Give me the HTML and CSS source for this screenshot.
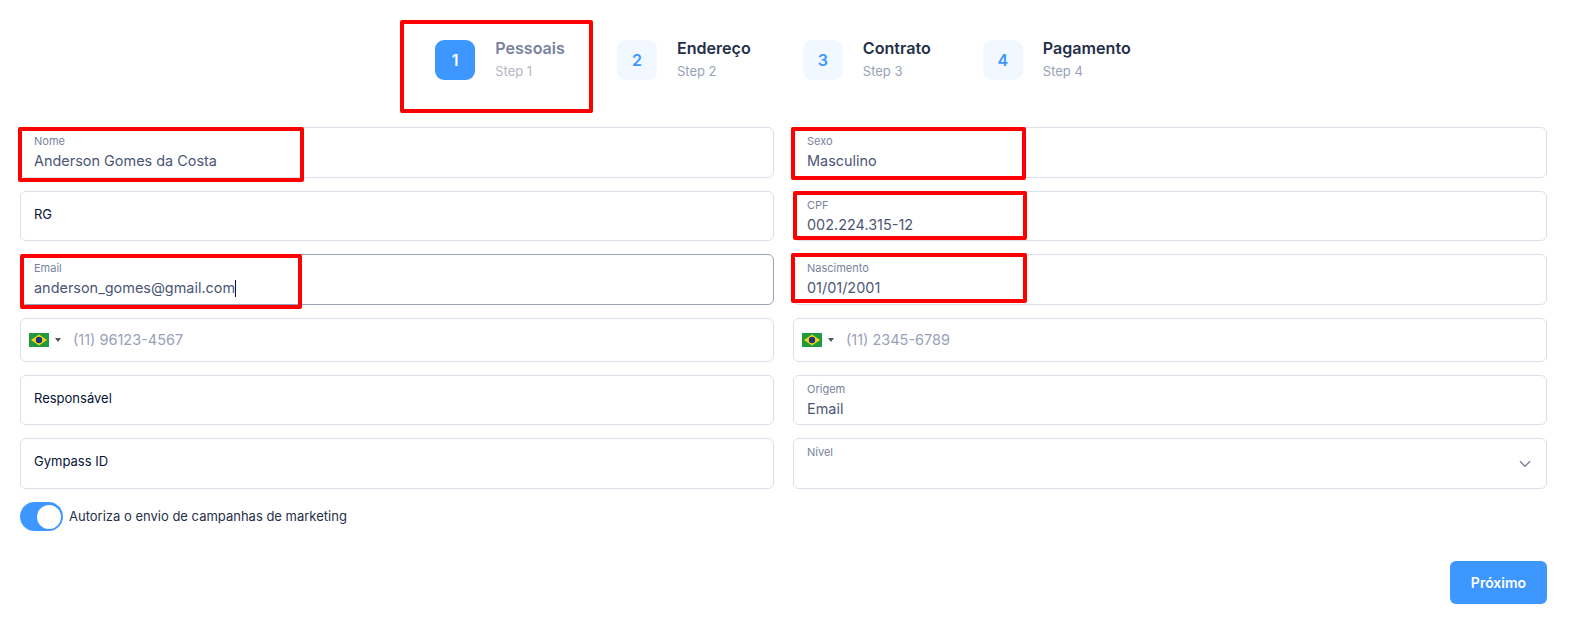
FILE: index.html
```html
<!DOCTYPE html>
<html lang="en">
<head>
    <meta charset="UTF-8">
    <meta name="viewport" content="width=device-width, initial-scale=1.0">
    <title>Cadastro</title>
    <link rel="stylesheet" href="styles.css">
</head>
<body>
    <!-- Passos -->
    <div class="stepper">
        <div class="step step-current">
            <div class="step-icon">1</div>
            <div class="step-text">
                <div class="step-title">Pessoais</div>
                <div class="step-desc">Step 1</div>
            </div>
            <div class="mark mark-step"></div>
        </div>
        <div class="step">
            <div class="step-icon">2</div>
            <div class="step-text">
                <div class="step-title">Endereço</div>
                <div class="step-desc">Step 2</div>
            </div>
        </div>
        <div class="step">
            <div class="step-icon">3</div>
            <div class="step-text">
                <div class="step-title">Contrato</div>
                <div class="step-desc">Step 3</div>
            </div>
        </div>
        <div class="step">
            <div class="step-icon">4</div>
            <div class="step-text">
                <div class="step-title">Pagamento</div>
                <div class="step-desc">Step 4</div>
            </div>
        </div>
    </div>

    <!-- Formulario -->
    <div class="form-grid">
        <div class="field field-tall">
            <div class="field-label">Nome</div>
            <div class="field-value">Anderson Gomes da Costa</div>
            <div class="mark mark-nome"></div>
        </div>
        <div class="field field-tall">
            <div class="field-label">Sexo</div>
            <div class="field-value">Masculino</div>
            <div class="mark mark-sexo"></div>
        </div>

        <div class="field field-empty">RG</div>
        <div class="field">
            <div class="field-label">CPF</div>
            <div class="field-value">002.224.315-12</div>
            <div class="mark mark-cpf"></div>
        </div>

        <div class="field field-tall field-focus">
            <div class="field-label">Email</div>
            <div class="field-value">anderson_gomes@gmail.com<span class="caret"></span></div>
            <div class="mark mark-email"></div>
        </div>
        <div class="field field-tall">
            <div class="field-label">Nascimento</div>
            <div class="field-value">01/01/2001</div>
            <div class="mark mark-nascimento"></div>
        </div>

        <div class="field field-phone">
            <svg class="flag" viewBox="0 0 20 14" width="20" height="14">
                <rect width="20" height="14" fill="#1f9a3c"/>
                <path d="M10 1.6 18 7l-8 5.4L2 7z" fill="#f7d417"/>
                <circle cx="10" cy="7" r="3.2" fill="#1c3578"/>
            </svg>
            <span class="flag-arrow"></span>
            <span class="phone-placeholder">(11) 96123-4567</span>
        </div>
        <div class="field field-phone">
            <svg class="flag" viewBox="0 0 20 14" width="20" height="14">
                <rect width="20" height="14" fill="#1f9a3c"/>
                <path d="M10 1.6 18 7l-8 5.4L2 7z" fill="#f7d417"/>
                <circle cx="10" cy="7" r="3.2" fill="#1c3578"/>
            </svg>
            <span class="flag-arrow"></span>
            <span class="phone-placeholder">(11) 2345-6789</span>
        </div>

        <div class="field field-empty">Responsável</div>
        <div class="field">
            <div class="field-label">Origem</div>
            <div class="field-value">Email</div>
        </div>

        <div class="field field-tall field-empty">Gympass ID</div>
        <div class="field field-tall field-select">
            <div class="field-label">Nível</div>
            <svg class="chevron" viewBox="0 0 12 8" width="12" height="8">
                <path d="M1 1.2 6 6.2l5-5" fill="none" stroke="#78829d" stroke-width="1.4"/>
            </svg>
        </div>
    </div>

    <div class="marketing">
        <div class="toggle"><div class="toggle-knob"></div></div>
        <span class="marketing-text">Autoriza o envio de campanhas de marketing</span>
    </div>

    <div class="actions">
        <button class="btn-next">Próximo</button>
    </div>
</body>
</html>
```

FILE: styles.css
```css
* {
    box-sizing: border-box;
}
body {
    margin: 0;
    padding: 40px 22px 0 20px;
    font-family: Inter, Arial, sans-serif;
    background-color: #fff;
    color: #071437;
}

/* Passos */
.stepper {
    display: flex;
    justify-content: center;
    gap: 52px;
    height: 87px;
    padding-right: 1px;
}
.step {
    position: relative;
    display: flex;
    gap: 20px;
    height: 40px;
}
.step-icon {
    display: flex;
    justify-content: center;
    align-items: center;
    width: 40px;
    height: 40px;
    border-radius: 9px;
    background-color: #f1f8ff;
    color: #3e97ff;
    font-size: 16px;
    font-weight: 600;
}
.step-title {
    font-size: 16.1px;
    line-height: 16px;
    font-weight: 600;
    color: #252f4a;
}
.step-desc {
    margin-top: 7px;
    font-size: 13px;
    line-height: 16px;
    color: #99a1b7;
}
.step-current .step-icon {
    background-color: #3e97ff;
    color: #fff;
}
.step-current .step-title {
    color: #78829d;
}
.step-current .step-desc {
    color: #b5b5c3;
}

/* Campos */
.form-grid {
    display: grid;
    grid-template-columns: 754px 754px;
    gap: 13px 19px;
}
.field {
    position: relative;
    height: 50px;
    padding: 7px 13px 0;
    border: 1px solid #dbdfe9;
    border-radius: 6px;
    background-color: #fff;
}
.field-tall {
    height: 51px;
}
.field-focus {
    border-color: #99a1b7;
}
.field-label {
    font-size: 11px;
    line-height: 13px;
    color: #78829d;
}
.field-value {
    margin-top: 3px;
    font-size: 14.45px;
    line-height: 20px;
    color: #4b5675;
}
.caret {
    display: inline-block;
    width: 1px;
    height: 17px;
    vertical-align: -4px;
    background-color: #071437;
}
.field-empty {
    padding-top: 14px;
    font-size: 13px;
    line-height: 16px;
    color: #071437;
}
.field-phone {
    display: flex;
    align-items: center;
    height: 44px;
    padding: 0 0 1px 8px;
}
.flag {
    flex: none;
}
.flag-arrow {
    width: 0;
    height: 0;
    margin-left: 6px;
    border-left: 3px solid transparent;
    border-right: 3px solid transparent;
    border-top: 4px solid #555;
}
.phone-placeholder {
    margin-left: 12px;
    font-size: 14.5px;
    color: #99a1b7;
}
.field-select .chevron {
    position: absolute;
    right: 15px;
    top: 21px;
}

/* Marketing */
.marketing {
    display: flex;
    align-items: center;
    gap: 6px;
    margin-top: 13px;
    font-size: 13px;
    color: #252f4a;
}
.marketing-text {
    margin-bottom: 2px;
}
.toggle {
    display: flex;
    justify-content: flex-end;
    align-items: center;
    width: 43px;
    height: 29px;
    padding-right: 2px;
    border-radius: 15px;
    background-color: #3e97ff;
}
.toggle-knob {
    width: 24px;
    height: 24px;
    border-radius: 50%;
    background-color: #fff;
}

.actions {
    display: flex;
    justify-content: flex-end;
    margin-top: 30px;
}
.btn-next {
    width: 97px;
    height: 43px;
    border: 0;
    border-radius: 6px;
    background-color: #3e97ff;
    color: #fff;
    font-family: inherit;
    font-size: 14px;
    font-weight: 600;
}

/* Marcas vermelhas da captura */
.mark {
    position: absolute;
    border: 4px solid #f00;
    border-radius: 2px;
    pointer-events: none;
}
.mark-step {
    left: -35px;
    top: -20px;
    width: 193px;
    height: 93px;
}
.mark-nome {
    left: -3px;
    top: -1px;
    width: 286px;
    height: 55px;
}
.mark-sexo {
    left: -3px;
    top: -1px;
    width: 235px;
    height: 53px;
}
.mark-cpf {
    left: -1px;
    top: -1px;
    width: 234px;
    height: 49px;
}
.mark-email {
    left: -1px;
    top: -1px;
    width: 282px;
    height: 55px;
}
.mark-nascimento {
    left: -3px;
    top: -2px;
    width: 236px;
    height: 50px;
}
```
